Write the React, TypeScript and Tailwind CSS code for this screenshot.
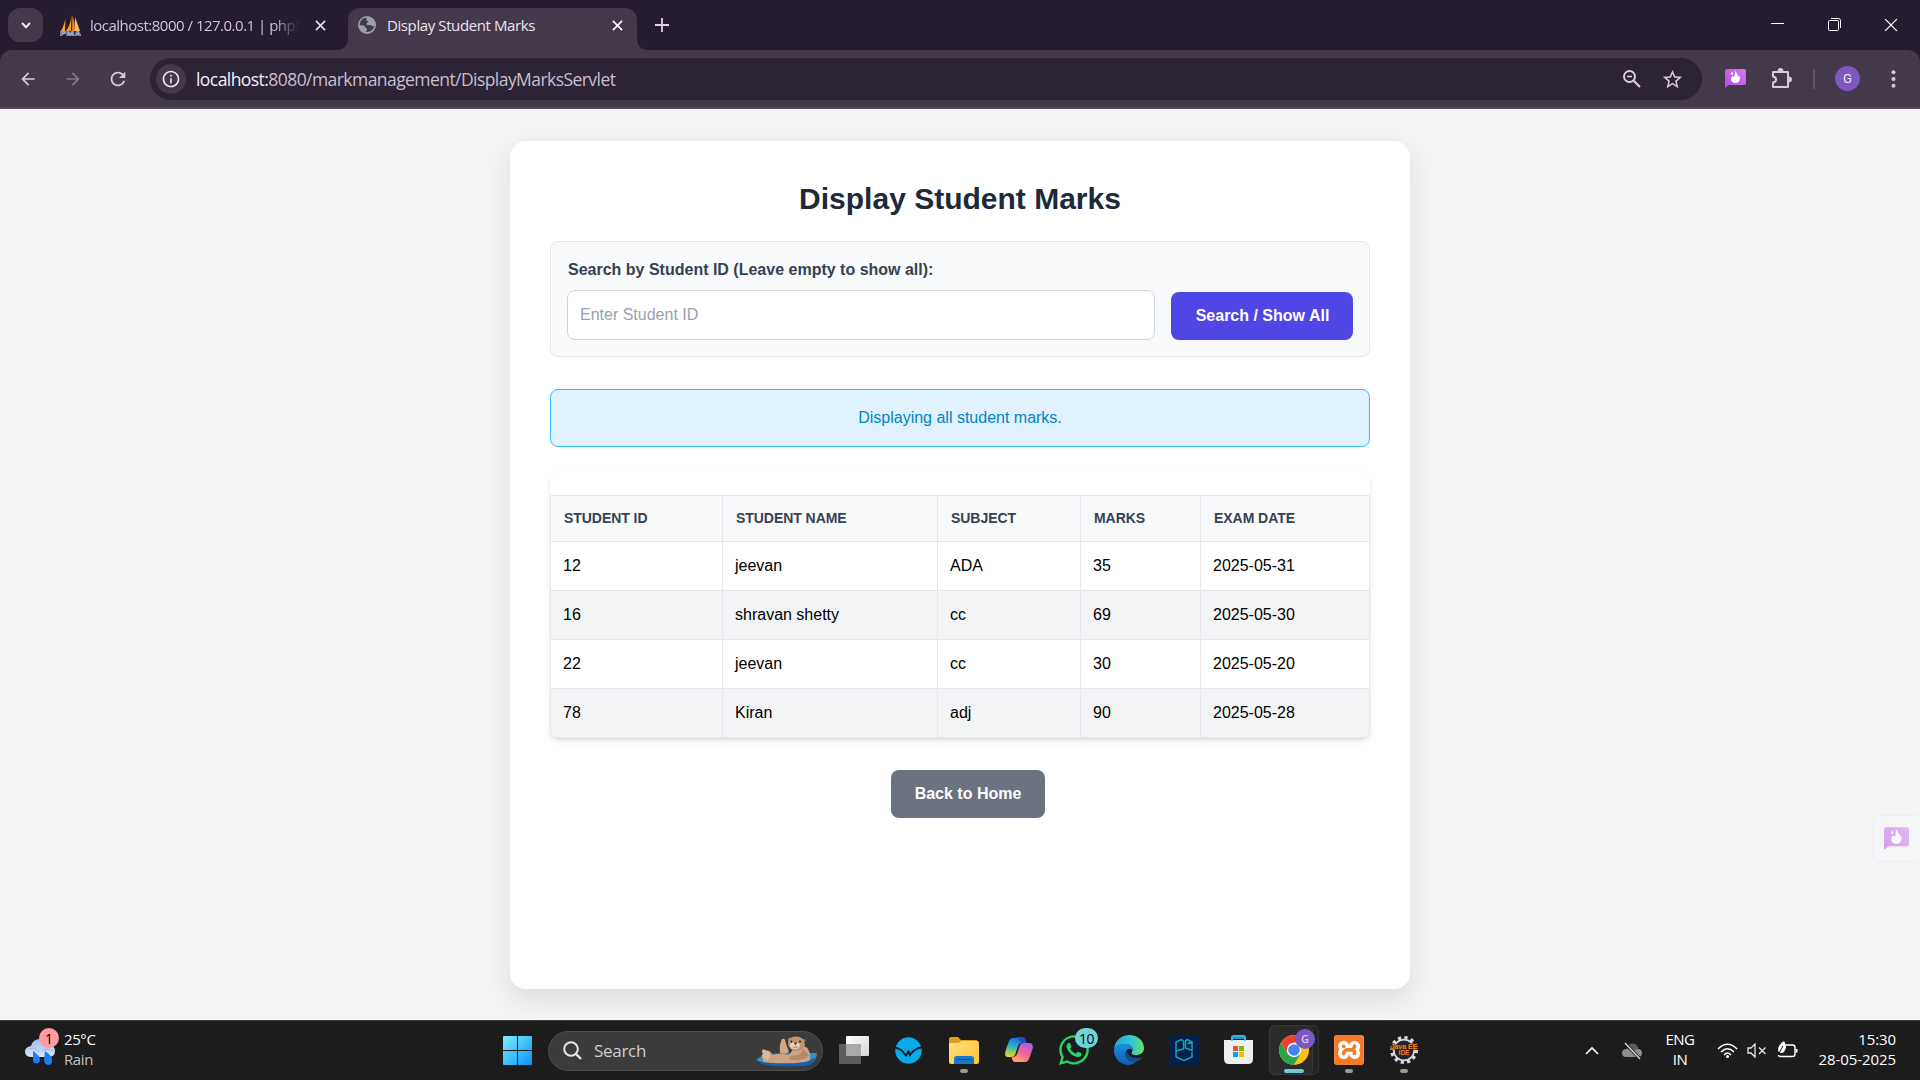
import React from "react";
import {
  MdArrowBack,
  MdArrowForward,
  MdRefresh,
  MdStarOutline,
  MdInfoOutline,
} from "react-icons/md";
import { FaWhatsapp } from "react-icons/fa";
import { SiXampp } from "react-icons/si";

const ui = "font-['Open_Sans','Noto_Sans',sans-serif]";

function Cross({ size = 11, w = 1.7 }: { size?: number; w?: number }) {
  return (
    <svg width={size} height={size} viewBox="0 0 12 12" fill="none" stroke="currentColor" strokeWidth={w}>
      <path d="M1 1 11 11M11 1 1 11" />
    </svg>
  );
}

function PmaIcon() {
  return (
    <svg width="21" height="21" viewBox="0 0 21 21">
      <path d="M5.500 3 5 16H1Q4 11 5.500 3Z" fill="#f6a22d" />
      <path d="M11.500 0 11 16H6Q10.500 10 11.500 0Z" fill="#f89c1c" />
      <path d="M15 2Q17.500 9 20 16H15Z" fill="#f7c06a" />
      <path d="M12.500 0Q15 7 15 16H12Z" fill="#f08a10" />
      <text x="0" y="20.600" textLength="21" lengthAdjust="spacingAndGlyphs" fontFamily="Liberation Sans" fontWeight="bold" fontSize="8" fill="#2f3c63" stroke="#b4bcd8" strokeWidth=".6">PMA</text>
    </svg>
  );
}

function Globe() {
  return (
    <svg width="18" height="18" viewBox="0 0 18 18">
      <circle cx="9" cy="9" r="9" fill="#9aa0a6" />
      <path d="M8.500 1.800C4 2.200 1.600 5.600 1.700 9.300L5.500 9.400C7 9.500 7.500 10.500 7.400 12L9 12.200V14.200L7.600 15.900C12 16.600 15.600 13.800 16.200 9.800 15 10.600 13.600 10.200 13 9.200L9.500 9C8.200 8.800 8 7 9.200 6.400L10.500 6.300C10.400 5 9.500 5.200 8.600 4.800Z" fill="#43394b" />
    </svg>
  );
}

function FlameBubble({ id, className }: { id: string; className?: string }) {
  return (
    <svg className={className} viewBox="0 0 21 19">
      <defs>
        <linearGradient id={id} x1="0" y1="1" x2="1" y2="0">
          <stop offset="0" stopColor="#b44be8" />
          <stop offset="1" stopColor="#cf7bf0" />
        </linearGradient>
      </defs>
      <path d="M0 2Q0 0 2 0H19Q21 0 21 2V14Q21 16 19 16H4L0 19Z" fill={`url(#${id})`} />
      <path d="M10.500 1.800C11 4 13 5.500 13.500 8C13.900 7.700 14.100 7 14 6.500C16 9.500 14.500 14 10.500 14C7.200 14 5.500 11.500 6.300 9C6.600 8 7.400 7.300 7.700 6.700C8 7.600 8.600 8 9.200 7.600C10.300 6.500 9.500 4 10.500 1.800Z" fill="#fff" />
      <path d="M7.200 2.600C7.300 3.800 8.200 4 8 5.100 7.600 6.200 5.900 6 5.800 4.800 5.800 4 6.900 3.700 7.200 2.600Z" fill="#fff" />
    </svg>
  );
}

function ZoomOutIcon({ className }: { className?: string }) {
  return (
    <svg className={className} width="18" height="18" viewBox="0 0 18 18" fill="none" stroke="currentColor" strokeWidth="2">
      <circle cx="6.500" cy="6.500" r="5.500" />
      <path d="M10.500 10.500 17 17" strokeWidth="2.200" />
      <path d="M4 6.500H9" strokeWidth="1.500" />
    </svg>
  );
}

function PuzzleIcon({ className }: { className?: string }) {
  return (
    <svg className={className} width="21" height="21" viewBox="0 0 21 21">
      <path d="M2 4H17V19H2V14.500Q5 14 5 11.500 5 9 2 8.500Z" fill="none" stroke="currentColor" strokeWidth="2" strokeLinejoin="round" />
      <path d="M6.500 3.500Q6.500 0 9.500 0 12.500 0 12.500 3.500ZM17.500 8.500Q21 8.500 21 11.500 21 14.500 17.500 14.500Z" fill="currentColor" />
    </svg>
  );
}

function TabStrip() {
  return (
    <div className={`flex h-[50px] items-start bg-[#251c2f] text-[15px] ${ui}`}>
      <div className="ml-2 mt-2 flex h-[34px] w-[35px] items-center justify-center rounded-xl bg-[#43394b] text-[#f2eaf5]">
        <svg width="10" height="7" viewBox="0 0 10 7" fill="none" stroke="currentColor" strokeWidth="2"><path d="M1 1 5 5.200 9 1" /></svg>
      </div>
      <div className="ml-4 flex h-[50px] w-[289px] items-center text-[#cfc5d6]">
        <div className="ml-px"><PmaIcon /></div>
        <div className="ml-[9px] w-[209px] overflow-hidden whitespace-nowrap tracking-[-0.5px] [mask-image:linear-gradient(to_right,black_88%,transparent)]">
          localhost:8000 / 127.0.0.1 | phpM
        </div>
        <div className="ml-[16px] text-[#e8dfee]"><Cross /></div>
      </div>
      <div className="relative mt-2 flex h-[42px] w-[289px] items-center rounded-t-xl bg-[#43394b] text-[#ece4f0]">
        <svg className="absolute -left-3 bottom-0" width="12" height="12"><path d="M12 0V12H0Q12 12 12 0Z" fill="#43394b" /></svg>
        <svg className="absolute -right-3 bottom-0" width="12" height="12"><path d="M0 0V12H12Q0 12 0 0Z" fill="#43394b" /></svg>
        <div className="-mt-2 ml-[10px]"><Globe /></div>
        <div className="-mt-2 ml-[11px] w-[225px] whitespace-nowrap tracking-[-0.4px]">Display Student Marks</div>
        <div className="-mt-2 text-white"><Cross /></div>
      </div>
      <div className="ml-[18px] mt-[18px] text-[#e0d3e8]">
        <svg width="14" height="14" viewBox="0 0 14 14" stroke="currentColor" strokeWidth="1.800"><path d="M7 0V14M0 7H14" /></svg>
      </div>
      <div className="ml-auto flex h-[46px] w-[149px] items-center justify-between pr-[22px] text-white">
        <svg className="mt-[2px]" width="13" height="13" viewBox="0 0 13 13" stroke="currentColor"><path d="M0 5.500H13" /></svg>
        <svg className="mt-[3px]" width="13" height="13" viewBox="0 0 13 13" fill="none" stroke="currentColor">
          <rect x=".5" y="2.500" width="10" height="10" rx="1" />
          <path d="M3 .5H10.500Q12.500 .5 12.500 2.500V10" />
        </svg>
        <div className="mt-[3px]"><Cross size={14} w={1.1} /></div>
      </div>
    </div>
  );
}

function Toolbar() {
  return (
    <div className="bg-[#251c2f]">
      <div className={`flex h-[59px] items-center rounded-t-xl border-b-2 border-[#54495c] bg-[#43394b] text-[#d8cbdf] ${ui}`}>
        <MdArrowBack className="ml-[18px] size-5" />
        <MdArrowForward className="ml-[25px] size-5 text-[#83788c]" />
        <MdRefresh className="ml-[24px] size-[22px]" />
        <div className="ml-[21px] mt-px flex h-[42px] w-[1552px] items-center rounded-full bg-[#2c2335]">
          <div className="ml-[6px] flex size-[30px] items-center justify-center rounded-full bg-[#43394b] text-[#ece4f0]">
            <MdInfoOutline className="size-5" />
          </div>
          <div className="ml-[10px] mt-px text-[17.500px] tracking-[-0.560px] text-[#c9bfd0]">
            <span className="text-[#f5f0f8]">localhost:</span>8080/markmanagement/DisplayMarksServlet
          </div>
          <ZoomOutIcon className="ml-auto" />
          <MdStarOutline className="ml-[20px] mr-[18px] size-[23px]" />
        </div>
        <FlameBubble id="flameBar" className="ml-[23px] h-[19px] w-[21px]" />
        <PuzzleIcon className="ml-[25px]" />
        <div className="ml-[21px] h-5 w-[2px] bg-[#5f5368]" />
        <div className="ml-[20px] flex size-[25px] items-center justify-center rounded-full bg-[#7e57c2] font-['Roboto',sans-serif] text-[13px] text-[#efe6fb]">G</div>
        <svg className="ml-[31px]" width="5" height="18" fill="currentColor"><circle cx="2.500" cy="2.300" r="2" /><circle cx="2.500" cy="9" r="2" /><circle cx="2.500" cy="15.700" r="2" /></svg>
      </div>
    </div>
  );
}

const columns = ["STUDENT ID", "STUDENT NAME", "SUBJECT", "MARKS", "EXAM DATE"];
const rows = [
  ["12", "jeevan", "ADA", "35", "2025-05-31"],
  ["16", "shravan shetty", "cc", "69", "2025-05-30"],
  ["22", "jeevan", "cc", "30", "2025-05-20"],
  ["78", "Kiran", "adj", "90", "2025-05-28"],
];
const grid = "grid grid-cols-[172px_215px_143px_120px_1fr]";

function MarksTable() {
  return (
    <div className="mt-6 rounded-lg pt-6 shadow-[0_4px_6px_-1px_rgba(0,0,0,0.1),0_2px_4px_-1px_rgba(0,0,0,0.06)]">
      <div className="overflow-hidden rounded-b-lg border border-gray-200">
        <div className={`${grid} h-[46px] divide-x divide-gray-200 border-b border-gray-200 bg-gray-50`}>
          {columns.map((c) => (
            <div key={c} className="flex items-center px-[13px] text-[14px] font-bold tracking-[-0.05px] text-gray-700">{c}</div>
          ))}
        </div>
        {rows.map((r) => (
          <div key={r[0]} className={`${grid} h-[49px] divide-x divide-gray-200 border-b border-gray-200 last:h-[48px] last:border-b-0 odd:bg-gray-100`}>
            {r.map((v, i) => (
              <div key={i} className="flex items-center px-3 text-[16px] text-black">{v}</div>
            ))}
          </div>
        ))}
      </div>
    </div>
  );
}

function Page() {
  return (
    <div className="relative h-[911px] overflow-hidden bg-[#f3f4f6] pt-8 font-['Liberation_Sans',Arial,sans-serif]">
      <div className="mx-auto h-[848px] w-[900px] rounded-2xl bg-white px-10 pt-10 shadow-[0_10px_30px_rgba(0,0,0,0.1)]">
        <h1 className="h-[36px] text-center text-[30px] font-bold leading-[36px] text-gray-800">Display Student Marks</h1>
        <div className="mt-6 flex h-[116px] items-end gap-4 rounded-lg border border-gray-200 bg-gray-50 p-4">
          <div className="flex-1">
            <div className="pl-px text-[16px] font-bold leading-6 text-gray-700">Search by Student ID (Leave empty to show all):</div>
            <div className="mt-[8px] flex h-[50px] items-center rounded-lg border border-gray-300 bg-white px-3 text-[16px] text-gray-400">Enter Student ID</div>
          </div>
          <button className="h-[48px] w-[182px] rounded-lg bg-[#4f46e5] pl-px text-[16px] font-bold text-white">Search / Show All</button>
        </div>
        <div className="mt-8 flex h-[58px] items-center justify-center rounded-lg border border-[#38bdf8] bg-[#e0f2fe] text-[16px] text-[#0284c7]">Displaying all student marks.</div>
        <MarksTable />
        <div className="mt-8 flex justify-center pl-4">
          <button className="h-[48px] w-[154px] rounded-lg bg-[#6b7280] text-[16px] font-bold text-white">Back to Home</button>
        </div>
      </div>
      <div className="absolute right-0 top-[707px] flex h-[45px] w-[46px] items-center rounded-l-lg bg-[#f4f5f7] pl-[10px] shadow-[0_0_4px_rgba(0,0,0,0.05)]">
        <FlameBubble id="flameSide" className="h-[23px] w-[25px] opacity-50" />
      </div>
    </div>
  );
}

function Otter() {
  return (
    <svg width="62" height="32" viewBox="0 0 62 32">
      <path d="M0 24Q6 17 31 17T61 17Q61 23 55 28 50 30 31 30 8 30 0 24Z" fill="#3390c8" />
      <path d="M7 18Q5 14 8 13.500 10 15 12 14.500 16 16 16 19 24 17 33 19L38 12Q49 8 52 13 56 20 53 26 30 28 14 27 5 28 7 23 4 20 7 18Z" fill="#cda483" />
      <path d="M7 18Q5 14 8 13.500L13 16Q15 20 12 24Q6 23 7 18Z" fill="#dcb898" />
      <path d="M24 17Q23 9 26 3 28 2 29 4 31 11 33 16 28 19 24 17Z" fill="#d1a885" />
      <circle cx="33.500" cy="3.200" r="1.600" fill="#9b7459" /><circle cx="48" cy="4.500" r="1.600" fill="#9b7459" />
      <path d="M32 8Q32 0 40.500 0.500 49 1 49 9 47 16 40 15 33 14 32 8Z" fill="#c0946f" />
      <ellipse cx="39" cy="9.500" rx="5" ry="3.500" fill="#ead0b7" />
      <path d="M37.500 6.500H41.500L39.500 8.800Z" fill="#2b1c15" />
      <circle cx="35.500" cy="5.500" r=".9" fill="#201510" /><circle cx="44" cy="5.500" r=".9" fill="#201510" />
      <path d="M39.500 8.500V10M37 11Q39.500 12 42 11" stroke="#795640" strokeWidth=".6" fill="none" />
      <path d="M47 13Q47 19 35 20 31 22 36 24 50 25 53 19Z" fill="#b58a69" />
      <path d="M0 24Q9 27.500 31 27.500T59 21Q58 26 54 29 30 32 10 29 3 27 0 24Z" fill="#1560ac" />
    </svg>
  );
}

function Cell({ children, dot }: { children: React.ReactNode; dot?: boolean }) {
  return (
    <div className="relative flex h-full w-[55px] items-center justify-center">
      {children}
      {dot && <span className="absolute bottom-[6px] h-1 w-2 rounded-full bg-[#989898]" />}
    </div>
  );
}

function WindowsIcon() {
  return (
    <svg width="29" height="29" viewBox="0 0 29 29">
      <defs><linearGradient id="win" x1="0" y1="0" x2="1" y2="1"><stop offset="0" stopColor="#7deeff" /><stop offset="1" stopColor="#0a91f5" /></linearGradient></defs>
      <path d="M0 1Q0 0 1 0H14V14H0ZM15 0H28Q29 0 29 1V14H15ZM0 15H14V29H1Q0 29 0 28ZM15 15H29V28Q29 29 28 29H15Z" fill="url(#win)" />
    </svg>
  );
}

function FolderIcon() {
  return (
    <svg width="30" height="27" viewBox="0 0 30 27">
      <defs><linearGradient id="fold" x1="0" y1="0" x2="1" y2="1"><stop offset="0" stopColor="#ffe083" /><stop offset="1" stopColor="#ffc52e" /></linearGradient></defs>
      <path d="M0 2Q0 0 2 0H9L12 3H28V10H0Z" fill="#e0a01c" />
      <path d="M0 6H9L13 4H28Q30 4 30 6V25Q30 27 28 27H2Q0 27 0 25Z" fill="url(#fold)" />
      <path d="M5 27V22Q5 19 8 19H22Q25 19 25 22V27Z" fill="#1679cf" />
      <path d="M8 22.500H22" stroke="#0b4a8a" strokeWidth="1.200" />
    </svg>
  );
}

function CopilotIcon() {
  return (
    <svg width="28" height="26" viewBox="0 0 28 26">
      <defs>
        <linearGradient id="cpA" x1=".4" y1="0" x2=".2" y2="1"><stop offset="0" stopColor="#1c6fe0" /><stop offset=".45" stopColor="#2cb5c9" /><stop offset=".75" stopColor="#9bcf4a" /><stop offset="1" stopColor="#f5cf2e" /></linearGradient>
        <linearGradient id="cpB" x1=".8" y1="0" x2=".3" y2="1"><stop offset="0" stopColor="#a65af0" /><stop offset=".5" stopColor="#f0629a" /><stop offset="1" stopColor="#ffa365" /></linearGradient>
      </defs>
      <path d="M8 1H18Q20 1 20.500 3L21.500 6H17Q14 6 13 9L10 18Q9 20 6 20H3Q-1 20 .5 14L4 4Q5 1 8 1Z" fill="url(#cpA)" />
      <path d="M20 25H10Q8 25 7.500 23L6.500 20Q11 20 12 17L15 8Q16 6 19 6H24Q29 6 27.500 12L24 22Q23 25 20 25Z" fill="url(#cpB)" />
      <path d="M10 0H18Q20 0 20.500 3L21.500 6H19Q16 6 15 4.500Q14 1 10 0Z" fill="#1c4fc4" />
    </svg>
  );
}

function EdgeIcon() {
  return (
    <svg width="30" height="30" viewBox="0 0 30 30">
      <defs>
        <linearGradient id="edA" x1="0" y1=".3" x2="1" y2=".3"><stop offset="0" stopColor="#24a9e4" /><stop offset=".6" stopColor="#35c5d0" /><stop offset="1" stopColor="#66e55c" /></linearGradient>
        <linearGradient id="edB" x1="0" y1="0" x2="0" y2="1"><stop offset="0" stopColor="#1b90dd" /><stop offset="1" stopColor="#0e5fb8" /></linearGradient>
      </defs>
      <path d="M0 14C1 5 8 0 15 0 24 0 30 6 30 13 30 18 26 20 22 20 18 20 17 18.500 18 17 19.500 15 19 10 12 9 6 8.500 2 11 0 14Z" fill="url(#edA)" />
      <path d="M0 14C2 10.500 7 8.500 12 9 17 9.500 19 13 18.500 15.500 17 12.500 13 13.500 12 17 11 22 15 28 22 26.500 20 29 16 30 14 30 5 29.500-.5 22 0 14Z" fill="url(#edB)" />
      <path d="M12 15C9.500 20 13 27 20 27 24 27 27 24.500 28.500 22 25 23.500 19 23.500 15.500 20.500 13.500 19 12.500 17 12 15Z" fill="#154a8c" />
    </svg>
  );
}

function ChromeIcon() {
  return (
    <svg width="30" height="30" viewBox="0 0 30 30">
      <circle cx="15" cy="15" r="15" fill="#fbc116" />
      <path d="M15 15V7.500H28Q23 0 15 0 6.500 0 2 7.500L8.500 18.700Z" fill="#ea4335" />
      <path d="M2 7.500C-3 16.500 2 29 14.800 30L21.500 18.700 15 22 8.500 18.700Z" fill="#2ba24c" />
      <circle cx="15" cy="15" r="7.200" fill="#fff" />
      <circle cx="15" cy="15" r="5.800" fill="#4285f4" />
    </svg>
  );
}

function JavaIcon() {
  return (
    <svg width="30" height="30" viewBox="0 0 30 30">
      <circle cx="15" cy="15" r="12.300" fill="none" stroke="#d8d8d8" strokeWidth="3.400" strokeDasharray="3.220 3.220" />
      <circle cx="15" cy="15" r="10.300" fill="#251d32" stroke="#d8d8d8" strokeWidth="1.800" />
      <text x="15" y="13.500" textAnchor="middle" textLength="27" lengthAdjust="spacingAndGlyphs" fontSize="7" fontWeight="bold" fontFamily="Liberation Sans" fill="#f58a1f" stroke="#30200f" strokeWidth="1.200" paintOrder="stroke">Java EE</text>
      <text x="15" y="19.800" textAnchor="middle" fontSize="6.500" fontWeight="bold" fontFamily="Liberation Sans" fill="#f58a1f">IDE</text>
    </svg>
  );
}

function Taskbar() {
  return (
    <div className={`flex h-[60px] items-center border-t border-[#3b3f42] bg-[#1c1c1c] text-[15px] text-white ${ui}`}>
      <div className="flex h-full w-[490px] shrink-0 items-center">
        <div className="relative ml-[25px] mt-[3px] h-[30px] w-[34px]">
          <svg width="31" height="30" viewBox="0 0 31 30">
            <defs><linearGradient id="cloud" x1="0" y1="0" x2="0" y2="1"><stop offset="0" stopColor="#9dbdf5" /><stop offset="1" stopColor="#dde5f5" /></linearGradient></defs>
            <path d="M7 20Q0 20 0 14.500 0 10 6 9 8 2 15 2 21 2 23 8 30 8 30 14 30 20 23 20Z" fill="url(#cloud)" />
            <path d="M4 12Q10 9 14 15M17 14Q22 10 29 14" stroke="#a5b4d8" fill="none" />
            <path d="M8 14 8 23Q8 26 11 26.500 15 26.500 15 22 15 19 8 14ZM20 14 19 24Q20 28 24 28 28 27 27 22 26 18 20 14Z" fill="#1c7cf2" />
          </svg>
          <span className="absolute -top-[9px] left-[14px] flex size-5 items-center justify-center rounded-full bg-[#ff99a4] text-[14px] text-black">1</span>
        </div>
        <div className="-mt-[3px] ml-[5px] leading-5 tracking-[-0.4px]">
          <div>25°C</div>
          <div className="text-[#c2c2c2]">Rain</div>
        </div>
      </div>
      <Cell><WindowsIcon /></Cell>
      <div className="ml-[3px] mr-[3px] flex h-10 w-[275px] shrink-0 items-center rounded-full border border-[#4d4d4d] bg-[#3b3b3b]">
        <svg className="ml-[14px]" width="19" height="19" viewBox="0 0 19 19" fill="none" stroke="#e6e6e6" strokeWidth="2"><circle cx="8" cy="8" r="6.800" /><path d="M13 13 18 18" strokeWidth="2.400" /></svg>
        <span className="ml-[12px] text-[17px] tracking-[-0.3px] text-[#d0d0d0]">Search</span>
        <div className="ml-auto mr-1 mt-[2px]"><Otter /></div>
      </div>
      <div className="flex h-full items-center pb-px">
        <Cell>
          <svg width="30" height="28" viewBox="0 0 30 28">
            <defs><linearGradient id="tv" x1="0" y1="0" x2="1" y2="1"><stop offset="0" stopColor="#fff" /><stop offset="1" stopColor="#d6d6d6" /></linearGradient></defs>
            <rect y="8" width="22" height="20" rx="1" fill="#5d5d5d" /><rect x="7" width="23" height="20" rx="1" fill="url(#tv)" /><rect x="7" y="8" width="15" height="12" fill="#a9a9a9" />
          </svg>
        </Cell>
        <Cell>
          <svg width="27" height="27" viewBox="0 0 27 27"><circle cx="13.500" cy="13.500" r="13.200" fill="#09a9ec" /><path d="M0 10.500Q6 12 8.500 15.500L11 18.500 13.500 14.500 15 18Q19 12 27 10" fill="none" stroke="#1c1c1c" strokeWidth="1.900" /></svg>
        </Cell>
        <Cell dot><FolderIcon /></Cell>
        <Cell><CopilotIcon /></Cell>
        <Cell>
          <FaWhatsapp className="size-[34px] text-[#25d366]" />
          <span className="absolute right-[3px] top-[7px] flex h-5 w-[23px] items-center justify-center rounded-full bg-[#6fd3dc] text-[14px] tracking-[-0.5px] text-black">10</span>
        </Cell>
        <Cell><EdgeIcon /></Cell>
        <Cell>
          <svg width="30" height="30" viewBox="0 0 30 30"><rect width="30" height="30" fill="#04204a" /><path d="M7 22V7L12.500 4.500 14.500 6V14L7 16M7 22 15 25.500 23 22V17M23 7 18 4.500 16.500 6V13L23 15.500V7L18.500 8.500" fill="none" stroke="#12a5b5" strokeWidth="1.500" /></svg>
        </Cell>
        <Cell>
          <svg width="29" height="30" viewBox="0 0 29 30">
            <path d="M8 7V2.500Q8 1 9.500 1H19.500Q21 1 21 2.500V7" fill="none" stroke="#2fb4ee" strokeWidth="2" />
            <path d="M0 5H29V24Q29 29 24 29H5Q0 29 0 24Z" fill="#efefef" />
            <path d="M8 6V3H21V6" fill="none" stroke="#2fb4ee" strokeWidth="1.500" />
            <path d="M9 11H14V16H9Z" fill="#f25022" /><path d="M15 11H20V16H15Z" fill="#7fba00" /><path d="M9 17H14V22H9Z" fill="#00a4ef" /><path d="M15 17H20V22H15Z" fill="#ffb900" />
          </svg>
        </Cell>
        <div className="relative flex h-full w-[55px] items-center justify-center">
          <span className="absolute left-[3px] top-[4px] h-[50px] w-[50px] rounded-md border border-[#343434] bg-[#222]" />
          <span className="absolute left-[3px] top-[4px] h-[50px] w-[44px] rounded-md border border-[#383838] bg-[#2b2b2b]" />
          <div className="relative"><ChromeIcon /></div>
          <span className="absolute right-[6px] top-[8px] flex size-5 items-center justify-center rounded-full bg-[#7e57c2] text-[11px] font-semibold text-[#d9c8f5]">G</span>
          <span className="absolute bottom-[6px] h-1 w-5 rounded-full bg-[#6fcbd3]" />
        </div>
        <Cell dot>
          <div className="flex size-[30px] items-center justify-center rounded-sm bg-white">
            <SiXampp className="size-[30px] text-[#f47a25]" />
          </div>
        </Cell>
        <Cell dot><JavaIcon /></Cell>
      </div>
      <div className="ml-auto flex h-full items-center pr-6">
        <svg width="14" height="9" viewBox="0 0 14 9" fill="none" stroke="#fff" strokeWidth="1.700"><path d="M1 8 7 2 13 8" /></svg>
        <svg className="ml-[23px]" width="21" height="18" viewBox="0 0 21 18">
          <path d="M4 15Q0 15 0 11 0 7 5 7 6 2 11 2 15 2 16 7 20 7 20 11 20 15 16 15Z" fill="#8d8d8d" />
          <path d="M8 2Q15 0 16 7L10 9 5 7Z" fill="#5e5e5e" />
          <path d="M3 1 18 17" stroke="#1c1c1c" strokeWidth="3" /><path d="M3 1 18 17" stroke="#e0e0e0" strokeWidth="1.200" />
        </svg>
        <div className="-mt-[3px] ml-[21px] w-[32px] text-center leading-5 tracking-[-0.5px]">ENG<br />IN</div>
        <svg className="ml-[21px]" width="21" height="16" viewBox="0 0 21 16" fill="none" stroke="#fff" strokeWidth="1.500"><path d="M1 6Q10.500-3.500 20 6M4 9Q10.500 2.500 17 9M7 12Q10.500 8 14 12" /><circle cx="10.500" cy="13.500" r="1.500" fill="#fff" stroke="none" /></svg>
        <svg className="ml-[9px]" width="20" height="15" viewBox="0 0 20 15" fill="none" stroke="#e8e8e8" strokeWidth="1.300"><path d="M1 5H4L8 1V14L4 10H1ZM12 4.500 18.500 11M18.500 4.500 12 11" /></svg>
        <svg className="-mt-[3px] ml-[10px]" width="21" height="17" viewBox="0 0 21 17" fill="none" stroke="#fff" strokeWidth="1.400"><path d="M9 4H15.500Q18 4 18 6.500V13Q18 15.500 15.500 15.500H3Q1.500 15.500 1.500 14" /><path d="M19.500 8V11.500" strokeWidth="2" /><path d="M1 9Q1 4 7 0 11 6 7 11 4 13 1.500 10.500Z" fill="#fff" stroke="none" /><path d="M6 5 1 14" stroke="#1c1c1c" strokeWidth="1" /></svg>
        <div className="-mt-[3px] ml-[20px] w-[78px] whitespace-nowrap text-right leading-5 tracking-[-0.080px]">
          <div>15:30</div>
          <div>28-05-2025</div>
        </div>
      </div>
    </div>
  );
}

export default function App() {
  return (
    <div className="flex h-[1080px] w-[1920px] flex-col overflow-hidden">
      <TabStrip />
      <Toolbar />
      <Page />
      <Taskbar />
    </div>
  );
}
